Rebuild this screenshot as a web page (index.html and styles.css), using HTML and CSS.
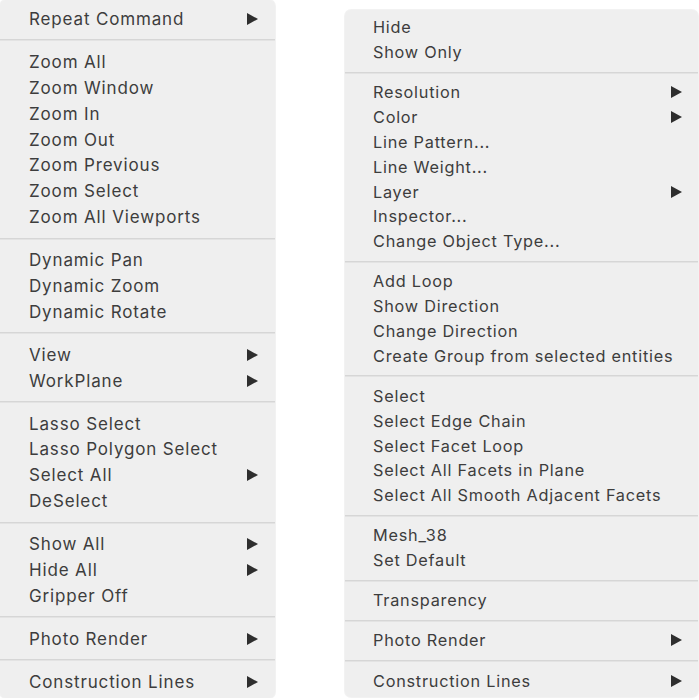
FILE: index.html
```html
<!DOCTYPE html>
<html lang="en">
<head>
    <meta charset="UTF-8">
    <meta name="viewport" content="width=device-width, initial-scale=1.0">
    <title>Context Menus</title>
    <link rel="stylesheet" href="styles.css">
</head>
<body>
    <div class="menus">
        <!-- viewport menu -->
        <ul class="menu menu-left">
            <li class="item has-sub">Repeat Command</li>
            <li class="sep"></li>
            <li class="item">Zoom All</li>
            <li class="item">Zoom Window</li>
            <li class="item">Zoom In</li>
            <li class="item">Zoom Out</li>
            <li class="item">Zoom Previous</li>
            <li class="item">Zoom Select</li>
            <li class="item">Zoom All Viewports</li>
            <li class="sep"></li>
            <li class="item">Dynamic Pan</li>
            <li class="item">Dynamic Zoom</li>
            <li class="item">Dynamic Rotate</li>
            <li class="sep"></li>
            <li class="item has-sub">View</li>
            <li class="item has-sub">WorkPlane</li>
            <li class="sep"></li>
            <li class="item">Lasso Select</li>
            <li class="item">Lasso Polygon Select</li>
            <li class="item has-sub">Select All</li>
            <li class="item">DeSelect</li>
            <li class="sep"></li>
            <li class="item has-sub">Show All</li>
            <li class="item has-sub">Hide All</li>
            <li class="item">Gripper Off</li>
            <li class="sep"></li>
            <li class="item has-sub">Photo Render</li>
            <li class="sep"></li>
            <li class="item has-sub">Construction Lines</li>
        </ul>

        <!-- object menu -->
        <ul class="menu menu-right">
            <li class="item">Hide</li>
            <li class="item">Show Only</li>
            <li class="sep"></li>
            <li class="item has-sub">Resolution</li>
            <li class="item has-sub">Color</li>
            <li class="item">Line Pattern...</li>
            <li class="item">Line Weight...</li>
            <li class="item has-sub">Layer</li>
            <li class="item">Inspector...</li>
            <li class="item">Change Object Type...</li>
            <li class="sep"></li>
            <li class="item">Add Loop</li>
            <li class="item">Show Direction</li>
            <li class="item">Change Direction</li>
            <li class="item">Create Group from selected entities</li>
            <li class="sep"></li>
            <li class="item">Select</li>
            <li class="item">Select Edge Chain</li>
            <li class="item">Select Facet Loop</li>
            <li class="item">Select All Facets in Plane</li>
            <li class="item">Select All Smooth Adjacent Facets</li>
            <li class="sep"></li>
            <li class="item">Mesh_38</li>
            <li class="item">Set Default</li>
            <li class="sep"></li>
            <li class="item">Transparency</li>
            <li class="sep"></li>
            <li class="item has-sub">Photo Render</li>
            <li class="sep"></li>
            <li class="item has-sub">Construction Lines</li>
        </ul>
    </div>
</body>
</html>
```

FILE: styles.css
```css
body {
    margin: 0;
    padding: 0;
    background-color: #fff;
    font-family: Inter, "Liberation Sans", Arial, sans-serif;
    color: #3d3d3d;
}
.menus {
    display: flex;
    align-items: flex-start;
}
.menu {
    list-style: none;
    margin: 0;
    background-color: #efefef;
    border-radius: 6px;
    box-shadow: 0 0 0 1px rgba(0, 0, 0, 0.05);
}
.menu-left {
    width: 275px;
    padding: 6px 0 3px;
    font-size: 17px;
    letter-spacing: 0.85px;
}
.menu-right {
    width: 353px;
    margin-top: 10px;
    margin-left: 70px;
    padding: 5px 0 4px;
    font-size: 16.3px;
    letter-spacing: 0.75px;
}
.item {
    position: relative;
    display: flex;
    align-items: center;
    height: 25.9px;
    padding-left: 29px;
    white-space: nowrap;
}
.menu-right .item {
    height: 24.8px;
    padding-left: 28px;
}
.has-sub::after {
    content: "";
    position: absolute;
    right: 17px;
    top: 50%;
    margin-top: -6px;
    border-left: 11px solid #2e2e2e;
    border-top: 6px solid transparent;
    border-bottom: 6px solid transparent;
}
.menu-right .has-sub::after {
    right: 16px;
}
.sep {
    height: 1px;
    margin: 7.5px 0;
    background-color: #d6d6d6;
    border-bottom: 1px solid #e3e3e3;
}
.menu-right .sep {
    margin: 7px 0 6.4px;
}
```
